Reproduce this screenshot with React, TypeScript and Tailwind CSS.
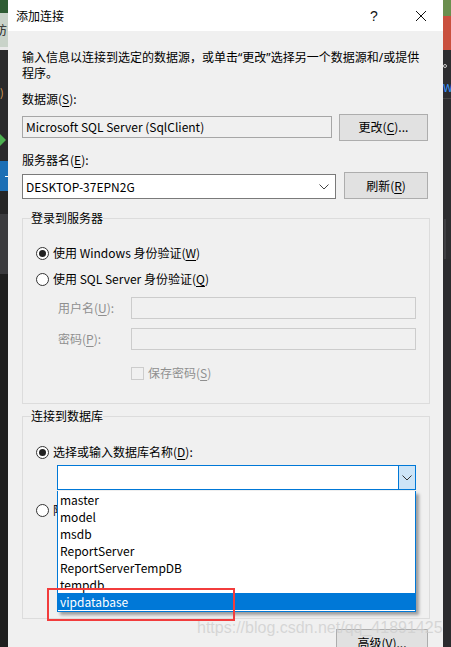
import React from "react"

const font = { fontFamily: '"Noto Sans CJK SC", "Noto Sans", sans-serif' }
const latin = { fontFamily: '"Noto Sans", "Liberation Sans", sans-serif' }

function K({ c }: { c: string }) {
  return <span className="underline underline-offset-[2px]">{c}</span>
}

function Radio({ on }: { on?: boolean }) {
  return (
    <span className="w-[13px] h-[13px] rounded-full border border-[#333] bg-white flex items-center justify-center shrink-0">
      {on && <span className="w-[7px] h-[7px] rounded-full bg-[#222]" />}
    </span>
  )
}

function Chevron({ color = "#444" }: { color?: string }) {
  return (
    <svg width="10" height="6" viewBox="0 0 10 6">
      <path d="M0.5 0.5 L5 5 L9.5 0.5" fill="none" stroke={color} strokeWidth="1" />
    </svg>
  )
}

const dbs = ["master", "model", "msdb", "ReportServer", "ReportServerTempDB", "tempdb", "vipdatabase"]

export default function App() {
  return (
    <div className="relative w-[451px] h-[647px] overflow-hidden flex bg-[#1e1e1e] text-black" style={font}>
      {/* left edge of the IDE behind */}
      <div className="w-[8px] flex flex-col shrink-0">
        <div className="h-[13px] bg-[#2f5d34]" />
        <div className="h-[34px] bg-[#c9d3c9] flex items-center text-[12px] leading-none text-[#222] overflow-hidden">
          <span className="-ml-[5px]">访</span>
        </div>
        <div className="h-[3px] bg-[#e8e8e8]" />
        <div className="h-[37px] bg-[#2a2a2b]" />
        <div className="h-[12px] bg-[#2a2a2b] text-[11px] leading-none text-[#d7a05a] overflow-hidden">)</div>
        <div className="h-[34px] bg-[#2a2a2b]" />
        <div className="h-[14px] bg-[#2a2a2b] flex items-center">
          <svg width="6" height="12" viewBox="0 0 6 12"><path d="M0 0 L6 6 L0 12 Z" fill="#4caf50" /></svg>
        </div>
        <div className="h-[14px] bg-[#2a2a2b]" />
        <div className="h-[30px] bg-[#1c6fb5] flex items-center justify-end"><span className="w-[3px] h-[1px] bg-white" /></div>
        <div className="h-[23px] bg-[#252526]" />
        <div className="h-[60px] bg-[#3b3b3e]" />
        <div className="flex-1 bg-[#1f1f1f]" />
      </div>

      {/* dialog */}
      <div className="w-[435px] shrink-0 flex flex-col bg-[#f0f0f0]">
        <div className="h-[31px] bg-white flex items-center pl-[8px] text-[12px] shrink-0">
          <span className="flex-1">添加连接</span>
          <span className="w-[12px] text-[14px] leading-none mr-[33px] text-[#111]" style={{ fontFamily: '"Liberation Sans", sans-serif' }}>?</span>
          <svg width="12" height="12" viewBox="0 0 12 12" className="mr-[16px]">
            <path d="M1 1 L11 11 M11 1 L1 11" stroke="#111" strokeWidth="1" />
          </svg>
        </div>

        <div className="flex flex-col pl-[14px] pr-[15px] text-[12px] leading-[16px]">
          <p className="mt-[18px] h-[32px] whitespace-nowrap">
            输入信息以连接到选定的数据源，或单击<span style={latin} className="leading-[12px]">“</span>更改<span style={latin} className="leading-[12px]">”</span>选择另一个数据源和<span style={latin} className="leading-[12px]">/</span>或提供
            <br />
            程序。
          </p>

          <div className="mt-[10px]">数据源(<K c="S" />):</div>
          <div className="mt-[6px] h-[28px] flex items-center justify-between">
            <div className="w-[310px] h-[22px] border border-[#a6a6a6] bg-[#f0f0f0] flex items-center pl-[3px]">
              Microsoft SQL Server (SqlClient)
            </div>
            <button className="w-[89px] h-[27px] bg-[#e1e1e1] border border-[#adadad] flex items-center justify-center">
              更改(<K c="C" />)...
            </button>
          </div>

          <div className="mt-[11px]">服务器名(<K c="E" />):</div>
          <div className="mt-[4px] h-[27px] flex items-end justify-between">
            <div className="w-[314px] h-[25px] border border-[#7a7a7a] bg-white flex items-center pl-[3px] pr-[6px]">
              <span className="flex-1">DESKTOP-37EPN2G</span>
              <Chevron />
            </div>
            <button className="w-[84px] h-[27px] bg-[#e1e1e1] border border-[#adadad] flex items-center justify-center">
              刷新(<K c="R" />)
            </button>
          </div>

          <fieldset className="mt-[11px] w-[408px] border border-[#dcdcdc] pb-[22px]">
            <legend className="ml-[8px] leading-[16px]">登录到服务器</legend>
            <div className="mt-[19px] h-[16px] flex items-center pl-[13px] gap-[4px]">
              <Radio on />
              <span>使用 Windows 身份验证(<K c="W" />)</span>
            </div>
            <div className="mt-[10px] h-[16px] flex items-center pl-[13px] gap-[4px]">
              <Radio />
              <span>使用 SQL Server 身份验证(<K c="Q" />)</span>
            </div>
            <div className="mt-[10px] h-[22px] flex items-center pl-[35px] text-[#8f8f8f]">
              <span className="w-[73px]">用户名(<K c="U" />):</span>
              <div className="w-[285px] h-[22px] border border-[#cccccc] bg-[#f0f0f0]" />
            </div>
            <div className="mt-[9px] h-[22px] flex items-center pl-[35px] text-[#8f8f8f]">
              <span className="w-[73px]">密码(<K c="P" />):</span>
              <div className="w-[285px] h-[22px] border border-[#cccccc] bg-[#f0f0f0]" />
            </div>
            <div className="mt-[15px] h-[16px] flex items-center pl-[108px] gap-[4px] text-[#8f8f8f]">
              <span className="w-[13px] h-[13px] border border-[#cccccc] bg-[#f0f0f0]" />
              <span>保存密码(<K c="S" />)</span>
            </div>
          </fieldset>

          <fieldset className="mt-[4px] w-[408px] h-[211px] border border-[#dcdcdc]">
            <legend className="ml-[8px] leading-[16px]">连接到数据库</legend>
            <div className="mt-[20px] h-[16px] flex items-center pl-[13px] gap-[4px]">
              <Radio on />
              <span>选择或输入数据库名称(<K c="D" />):</span>
            </div>
            <div className="mt-[5px] ml-[34px] w-[359px] h-[25px] border border-[#0078d7] bg-white flex justify-end">
              <div className="w-[17px] h-full bg-[#cce4f7] border-l border-[#0078d7] flex items-center justify-center">
                <Chevron color="#333" />
              </div>
            </div>
            <div className="mt-[12px] h-[16px] flex items-center pl-[13px] gap-[4px]">
              <Radio />
              <span>附加数据库文件(<K c="H" />):</span>
            </div>
          </fieldset>

          <button className="mt-[10px] self-end w-[92px] h-[27px] bg-[#e1e1e1] border border-[#adadad] flex items-center justify-center shrink-0">
            高级(<K c="V" />)...
          </button>
        </div>
      </div>

      {/* right edge of the IDE behind */}
      <div className="w-[8px] flex flex-col shrink-0">
        <div className="h-[16px] bg-[#6b8f4e]" />
        <div className="h-[34px] bg-[#c9503e]" />
        <div className="h-[6px] bg-[#2d2d30]" />
        <div className="h-[20px] bg-[#2d2d30] flex items-center">
          <span className="w-[4px] h-[4px] rounded-full border border-[#cfcfcf]" />
        </div>
        <div className="h-[22px] bg-[#2d2d30] text-[11px] leading-[22px] text-[#3794ff] overflow-hidden">W</div>
        <div className="h-[1px] bg-[#454545]" />
        <div className="h-[120px] bg-[#2d2d30]" />
        <div className="h-[40px] bg-[#2d2d30] flex">
          <span className="w-[2px] bg-[#3e3e42] ml-[1px]" />
        </div>
        <div className="flex-1 bg-[#2b2b2e]" />
      </div>

      {/* open drop-down list */}
      <div className="absolute left-[57px] top-[491px] w-[359px] h-[121px] border border-[#0078d7] border-t-0 bg-white shadow-[3px_3px_3px_rgba(0,0,0,0.35)] text-[12px]">
        {dbs.map((d) => (
          <div
            key={d}
            className={
              d === "vipdatabase"
                ? "h-[17px] leading-[17px] pl-[2px] bg-[#0078d7] text-white"
                : "h-[17px] leading-[17px] pl-[2px]"
            }
          >
            {d}
          </div>
        ))}
      </div>

      {/* annotation */}
      <div className="absolute left-[47px] top-[588px] w-[188px] h-[33px] border-2 border-[#f23c3c]" />

      <div
        className="absolute left-[197px] top-[618px] text-[16px] leading-[20px] text-[rgba(205,205,205,0.75)] whitespace-nowrap"
        style={{ fontFamily: '"Liberation Sans", Arial, sans-serif' }}
      >
        https://blog.csdn.net/qq_41891425
      </div>
    </div>
  )
}
